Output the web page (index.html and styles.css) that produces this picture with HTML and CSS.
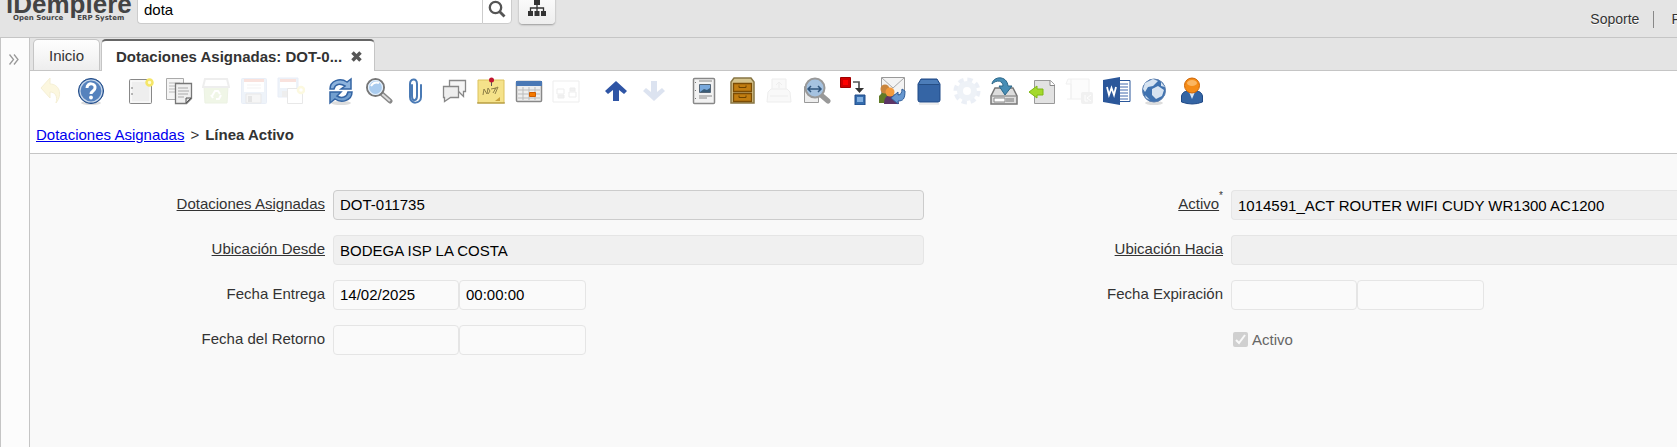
FILE: index.html
```html
<!DOCTYPE html>
<html lang="es">
<head>
<meta charset="utf-8">
<title>iDempiere - Dotaciones Asignadas</title>
<link rel="stylesheet" href="styles.css">
</head>
<body>
<header class="top-bar">
  <div class="logo">
    <div class="logo-name">iDempiere</div>
    <div class="logo-sub"><span>Open Source</span><span>ERP System</span></div>
  </div>
  <form class="global-search">
    <input type="text" aria-label="Buscar" value="dota">
    <button type="button" class="search-btn" aria-label="Buscar">
      <svg width="18" height="18" viewBox="0 0 18 18" fill="none" stroke="#555"><circle cx="7.500" cy="7.500" r="5.700" stroke-width="2.300"/><path d="M11.500 11.500l5 5" stroke-width="2.800"/></svg>
    </button>
  </form>
  <button type="button" class="menu-btn" aria-label="Menú">
    <svg width="18" height="16" viewBox="0 0 18 16" fill="#333"><path d="M6 0h6v5H6zM0 11h5v5H0zM6.500 11h5v5h-5zM13 11h5v5h-5z"/><path d="M9 4v7M2.500 11V8h13v3" fill="none" stroke="#333" stroke-width="1.300"/></svg>
  </button>
  <nav class="user-links">
    <a href="#">Soporte</a>
    <a href="#">Preferencia</a>
  </nav>
</header>

<div class="desktop">
  <aside class="side-bar">
    <button type="button" aria-label="Expandir">
      <svg width="10" height="11" viewBox="0 0 10 11" fill="none" stroke="#999" stroke-width="1.300"><path d="M.5.500l4 5-4 5M5 .5l4 5-4 5"/></svg>
    </button>
  </aside>
  <main class="window">
    <div class="tabs">
      <button type="button" class="tab">Inicio</button>
      <button type="button" class="tab selected">Dotaciones Asignadas: DOT-0...
        <svg width="11" height="11" viewBox="0 0 11 11"><path d="M1.500 1.500l8 8M9.500 1.500l-8 8" stroke="#555" stroke-width="3.500"/></svg>
      </button>
    </div>

    <div class="toolbar">
      <div class="group pair">
        <button type="button" disabled aria-label="Deshacer"><svg viewBox="0 0 28 28"><path d="M2 11L11 1v6c9 0 13 10 6 19 2-7-1-11-6-11v6z" fill="#edd440" stroke="#c4a000"/></svg></button>
        <button type="button" aria-label="Ayuda"><svg viewBox="0 0 28 28"><ellipse cx="14" cy="26" rx="10" ry="2" fill="#ddd"/><circle cx="14" cy="14" r="12.500" fill="#3465a4" stroke="#204a87"/><circle cx="14" cy="14" r="11" fill="#5582bd" stroke="#c9d8eb" stroke-width="1.200"/><path d="M10 11c0-6 9-5 8 0 0 3-4 3-4 6" fill="none" stroke="#fff" stroke-width="3"/><circle cx="14" cy="20.500" r="1.900" fill="#fff"/></svg></button>
      </div>
      <div class="group five">
        <button type="button" aria-label="Nuevo"><svg viewBox="0 0 28 28"><rect x="2.500" y="2.500" width="22" height="24" rx="1" fill="#eee" stroke="#888"/><path d="M4 4h19v21H4z" fill="none" stroke="#fff"/><path d="M4 11h2M4 17h2" stroke="#777"/><circle cx="22.500" cy="5.500" r="3" fill="#fffbd0" stroke="#f5e668" stroke-width="2.500"/></svg></button>
        <button type="button" aria-label="Copiar"><svg viewBox="0 0 28 28"><path d="M1.500 1.500h17v21h-17z" fill="#f5f5f5" stroke="#aaa"/><path d="M4 6h11M4 9h11M4 12h11M4 15h11" stroke="#bbb"/><path d="M10.500 6.500h16v15l-5 5h-11z" fill="#f0f0f0" stroke="#777" stroke-width="1.300"/><path d="M13 11h10M13 14h11M13 17h10M13 20h6" stroke="#aaa"/><path d="M26 21h-5v5z" fill="#ddd" stroke="#555"/></svg></button>
        <button type="button" disabled aria-label="Borrar"><svg viewBox="0 0 28 28"><path d="M2 9h24l-1 17H3z" fill="#a8cc70" stroke="#8cb058"/><path d="M3 2h22l2 8H1z" fill="#fff" stroke="#999" stroke-width="2"/><path d="M10 19l3-5h3l2 3M19 18l-2 4h-3M11 21l-2-3" fill="none" stroke="#fff" stroke-width="2"/></svg></button>
        <button type="button" disabled aria-label="Guardar"><svg viewBox="0 0 28 28"><rect x="1.500" y="1.500" width="25" height="25" rx="1" fill="#9bb7e0" stroke="#7a9cd0"/><path d="M4 2h20v13H4z" fill="#fff"/><path d="M4 2h20v3H4z" fill="#e05030"/><path d="M7 8h14M7 11h14" stroke="#bbb"/><path d="M6 17h15v9H6z" fill="#ccc" stroke="#777"/><path d="M8 19h4v6H8z" fill="#666"/></svg></button>
        <button type="button" disabled aria-label="Guardar y crear"><svg viewBox="0 0 28 28"><path d="M1 1h20v19H1z" fill="#9bb7e0" stroke="#7a9cd0"/><path d="M3 2h16v9H3z" fill="#fff"/><path d="M3 2h16v3H3z" fill="#e05030"/><path d="M5 14h7v6H5z" fill="#999"/><path d="M10.500 11.500h15v15h-15z" fill="#fff" stroke="#777"/><circle cx="24" cy="13" r="3" fill="#fff" stroke="#f2dd45" stroke-width="2.500"/></svg></button>
      </div>
      <div class="group seven">
        <button type="button" aria-label="Refrescar"><svg viewBox="0 0 28 28"><ellipse cx="14" cy="26" rx="10" ry="2" fill="#ddd"/><path d="M3 12C3 4 13 0 20 5l4-3v10H14l4-3C13 6 8 7 7 12z" fill="#8db3dd" stroke="#3465a4" stroke-width="1.500"/><path d="M25 15c0 8-10 12-17 7l-5 4V15h11l-4 4c5 3 10 1 11-4z" fill="#729fcf" stroke="#3465a4" stroke-width="1.500"/></svg></button>
        <button type="button" aria-label="Buscar registro"><svg viewBox="0 0 28 28"><path d="M16 16l9 8" stroke="#888" stroke-width="5" stroke-linecap="round"/><path d="M17 17l8 7" stroke="#ddd" stroke-width="2"/><circle cx="10.500" cy="10.500" r="8.500" fill="#aaccef" stroke="#777" stroke-width="2"/><circle cx="10.500" cy="10.500" r="7" fill="none" stroke="#e7f1fb" stroke-width="1.200"/><path d="M6 9q3-5 8-3" fill="none" stroke="#fff" stroke-width="2"/></svg></button>
        <button type="button" aria-label="Adjuntar"><svg viewBox="0 0 28 28"><path d="M10 8v11c0 6 5 5 5 0V7c0-7-7-5-7 0v13c0 8 11 7 11 0V8" fill="none" stroke="#4a7ab5" stroke-width="2" stroke-linecap="round"/></svg></button>
        <button type="button" aria-label="Chat"><svg viewBox="0 0 28 28"><path d="M9.500 3.500h16v11h-2v5l-5-5h-9z" fill="#f5f5f5" stroke="#888" stroke-width="1.300"/><path d="M3.500 9.500h15v11h-8l-6 4v-4h-1z" fill="#eee" stroke="#888" stroke-width="1.300"/></svg></button>
        <button type="button" aria-label="Nota"><svg viewBox="0 0 28 28"><path d="M1 3h26v23H1z" fill="#f5e28a" stroke="#dcc25c"/><path d="M0 26h28" stroke="#a58b35"/><path d="M6 18l1-6 3 5 1-6 2 3-2 3m3-5l5-1-3 5m1-4l4-2-3 7" fill="none" stroke="#8f8048"/><path d="M18 24l5-4v4z" fill="#c9a23c"/><path d="M14.500 4v5" stroke="#555"/><circle cx="14.500" cy="3" r="2.500" fill="#c01430"/></svg></button>
        <button type="button" aria-label="Calendario"><svg viewBox="0 0 28 28"><rect x="1.500" y="4.500" width="25" height="20" rx="1" fill="#eee" stroke="#888" stroke-width="1.500"/><path d="M1 4h26v5H1z" fill="#4a78b5"/><path d="M3 13h22M3 17h22M3 21h22M8 10v13M14 10v13M20 10v13" stroke="#bbb"/><path d="M14.500 15.500h6v4h-6z" fill="#f57900" stroke="#ce5c00"/></svg></button>
        <button type="button" disabled aria-label="Vista rápida"><svg viewBox="0 0 28 28" fill="none" stroke="#999"><path d="M1 4h26v21H1z"/><path d="M5 12h7v5H5zM17 15h7v5h-7z"/><path d="M6 18h6v3H6zM18 11h5v3h-5z" fill="#aaa"/></svg></button>
      </div>
      <div class="group pair">
        <button type="button" aria-label="Anterior"><svg viewBox="0 0 28 28"><path d="M14 4L3 14l3 3 5-4v11h6V13l5 4 3-3z" fill="#2f55a5"/></svg></button>
        <button type="button" disabled aria-label="Siguiente"><svg viewBox="0 0 28 28"><path d="M14 24L3 14l3-3 5 4V4h6v11l5-4 3 3z" fill="#2f55a5"/></svg></button>
      </div>
      <div class="group fourteen">
        <button type="button" aria-label="Informe"><svg viewBox="0 0 28 28"><rect x="3.500" y="1.500" width="21" height="25" rx="1" fill="#f2f2f2" stroke="#888" stroke-width="1.500"/><path d="M9 4h13M9 19h13M9 21h8" stroke="#888"/><path d="M5.500 5v1m0 7v1m0 7v1" stroke="#777"/><path d="M9.500 7.500h11v8h-11z" fill="#78a8dc" stroke="#567"/><path d="M10 15l4-3 3 1 3-2v4z" fill="#395c78"/></svg></button>
        <button type="button" aria-label="Archivo"><svg viewBox="0 0 28 28"><path d="M3 26V5l3-4h17l3 4v21z" fill="#d6c58e" stroke="#887644" stroke-width="1.500"/><path d="M5.500 6.500h18v8h-18zM5.500 16.500h18v8h-18z" fill="#c17d11" stroke="#7b4c04" stroke-width="1.300"/><path d="M11 8.500v2h7v-2m-7 10v2h7v-2" fill="none" stroke="#704500"/></svg></button>
        <button type="button" disabled aria-label="Imprimir"><svg viewBox="0 0 28 28" fill="#ddd" stroke="#999"><path d="M7 14V2h14v12"/><path d="M3 15l3-3h16l3 3 1 10H2z"/><path d="M5 19h18M14 11V5m-3 3l3-3 3 3" fill="none"/></svg></button>
        <button type="button" aria-label="Zoom"><svg viewBox="0 0 28 28"><path d="M1.500 9.500h14v16h-14z" fill="#eee" stroke="#999"/><path d="M18 18l7 6" stroke="#999" stroke-width="5" stroke-linecap="round"/><circle cx="12" cy="11" r="9.500" fill="#a5c2e0" stroke="#999" stroke-width="2"/><path d="M5 12h13M8 9l-3 3 3 3M15 9l3 3-3 3" fill="none" stroke="#31577f" stroke-width="1.500"/></svg></button>
        <button type="button" aria-label="Flujos activos"><svg viewBox="0 0 28 28"><path d="M.5.500h10v10H.5z" fill="#d00000" stroke="#a00000"/><path d="M3 3h5v5H3z" fill="#f00"/><path d="M13 5h6v8" fill="none" stroke="#555" stroke-width="1.700"/><path d="M15 11h9l-4.500 5z" fill="#333"/><path d="M15 18h10v10H15z" fill="#346cae" stroke="#204a87"/><path d="M17 20h6v5h-6z" fill="#82afe0"/></svg></button>
        <button type="button" aria-label="Solicitudes"><svg viewBox="0 0 28 28"><path d="M3.500.500h23v17h-23z" fill="#f3f3f3" stroke="#999"/><path d="M4 1l11 10L26 1" fill="none" stroke="#aaa"/><path d="M1 26v-7l4-4h6l3 4v7z" fill="#607b27"/><circle cx="7" cy="12" r="4.500" fill="#c9853d"/><path d="M6 27c0-8 4-9 8-9s6 3 7 9z" fill="#5c3566"/><circle cx="12" cy="15" r="4.500" fill="#f39a3c"/><path d="M13 21l7-6v3q4 0 4-6l3 2c0 8-2 10-7 10v3z" fill="#6797cf" stroke="#315f9b"/></svg></button>
        <button type="button" aria-label="Producto"><svg viewBox="0 0 28 28"><path d="M6 2h16l3 5v16q0 2-2 2H5q-2 0-2-2V7z" fill="#3565a5" stroke="#204a87"/><path d="M6 3h16l2 4H4z" fill="#4c7db9"/><path d="M4 7.500h20" stroke="#254e84"/><path d="M4 27h20" stroke="#ddd"/></svg></button>
        <button type="button" disabled aria-label="Proceso"><svg viewBox="0 0 28 28"><circle cx="14" cy="14" r="11" fill="none" stroke="#88a3c9" stroke-width="5" stroke-dasharray="5 3.640"/><circle cx="14" cy="14" r="7" fill="none" stroke="#99b2d4" stroke-width="6"/></svg></button>
        <button type="button" aria-label="Exportar"><svg viewBox="0 0 28 28"><path d="M5 11h18l4 8v8H1v-8z" fill="#ddd" stroke="#777" stroke-width="1.500"/><path d="M2 19h24" stroke="#777"/><path d="M4 21h11v4H4z" fill="#fff" stroke="#888"/><path d="M17 21v4m2-4v4m2-4v4m2-4v4" stroke="#777"/><path d="M2 7C3-1 17-2 18 9h4l-7 9-6-9h4c0-5-6-7-11-2z" fill="#478db5" stroke="#2d6788"/></svg></button>
        <button type="button" aria-label="Importar archivo"><svg viewBox="0 0 28 28"><path d="M6.500 3.500h16l4 4v19h-20z" fill="#e2e2e2" stroke="#999"/><path d="M22 3.500v5h5" fill="#fff" stroke="#888"/><path d="M1 15l8-6v3h6v6H9v3z" fill="#a4d92c" stroke="#7fb814"/></svg></button>
        <button type="button" disabled aria-label="Importar CSV"><svg viewBox="0 0 28 28"><path d="M3 2h21v20H6V7H1z" fill="#eee" stroke="#aaa"/><path d="M6 2v20H2" fill="none" stroke="#aaa"/><rect x="16" y="15" width="12" height="12" rx="2" fill="#aaa"/><path d="M20 18v6h3m3-6l-4 3 4 3" fill="none" stroke="#fff"/></svg></button>
        <button type="button" aria-label="Word"><svg viewBox="0 0 28 28"><path d="M15 3.500h12v21H15z" fill="#fff" stroke="#2b579a"/><path d="M17 7h8M17 10h8M17 13h8M17 16h8M17 19h8M17 22h8" stroke="#4169ad"/><path d="M0 3l17-3v28L0 25z" fill="#2b579a"/><path d="M4 10l2 8 2.500-7 2.500 7 2-8" fill="none" stroke="#fff" stroke-width="1.800"/></svg></button>
        <button type="button" aria-label="Web"><svg viewBox="0 0 28 28"><ellipse cx="14" cy="26" rx="9" ry="2" fill="#ddd"/><circle cx="14" cy="13.500" r="11.500" fill="#3f72b0" stroke="#5d7fae"/><path d="M5 6l8-4 5 2-5 5-5 1-3 5-2-3zM12 12l6-3 6 4-2 6-6 3-4-4zM21 5l4 5-4-1zM5 18l5 5-4-2z" fill="#d6e3f1"/></svg></button>
        <button type="button" aria-label="Usuario"><svg viewBox="0 0 28 28"><path d="M3.500 25v-6q1-5 7-5h7q6 0 7 5v6q-10 4-21 0z" fill="#3465a4" stroke="#204a87"/><path d="M11 15h6l-3 7z" fill="#d6e5f5"/><circle cx="14" cy="8.500" r="7.500" fill="#f58b16" stroke="#ce6504"/><ellipse cx="14" cy="6" rx="5" ry="3" fill="#fbb662"/></svg></button>
      </div>
    </div>

    <nav class="breadcrumb"><a href="#">Dotaciones Asignadas</a><span>&gt;</span><strong>Línea Activo</strong></nav>

    <form class="record">
      <label class="zoomable" for="dotacion"><span>Dotaciones Asignadas</span></label>
      <input class="editor parent" type="text" id="dotacion" value="DOT-011735" readonly>
      <label class="zoomable" for="activo"><span>Activo</span><sup>*</sup></label>
      <input class="editor readonly" type="text" id="activo" value="1014591_ACT ROUTER WIFI CUDY WR1300 AC1200" readonly>

      <label class="zoomable" for="desde"><span>Ubicación Desde</span></label>
      <input class="editor readonly" type="text" id="desde" value="BODEGA ISP LA COSTA" readonly>
      <label class="zoomable" for="hacia"><span>Ubicación Hacia</span></label>
      <input class="editor readonly" type="text" id="hacia" readonly>

      <label for="entrega">Fecha Entrega</label>
      <div class="datetime">
        <input class="editor" type="text" id="entrega" value="14/02/2025" readonly>
        <input class="editor" type="text" aria-label="Hora Entrega" value="00:00:00" readonly>
      </div>
      <label for="expiracion">Fecha Expiración</label>
      <div class="datetime">
        <input class="editor" type="text" id="expiracion" readonly>
        <input class="editor" type="text" aria-label="Hora Expiración" readonly>
      </div>

      <label for="retorno">Fecha del Retorno</label>
      <div class="datetime">
        <input class="editor" type="text" id="retorno" readonly>
        <input class="editor" type="text" aria-label="Hora del Retorno" readonly>
      </div>
      <div class="check">
        <input type="checkbox" id="isactive" checked disabled>
        <label for="isactive">Activo</label>
      </div>
    </form>
  </main>
</div>
</body>
</html>
```

FILE: styles.css
```css
* {
  box-sizing: border-box;
}
body {
  margin: 0;
  min-height: 100vh;
  display: flex;
  flex-direction: column;
  font-family: "Liberation Sans", Arial, sans-serif;
  font-size: 15px;
  color: #333;
  background-color: #f9f9f9;
  overflow: hidden;
}
button, input {
  font: inherit;
  margin: 0;
}
svg {
  display: block;
}

/* header */
.top-bar {
  display: flex;
  align-items: flex-end;
  height: 38px;
  padding: 0 0 13px 6px;
  overflow: hidden;
  background-color: #e4e4e4;
  border-bottom: 1px solid #c5c5c5;
}
.logo {
  width: 131px;
  padding-bottom: 2px;
  color: #444;
  font-weight: bold;
}
.logo-name {
  font-size: 26px;
  line-height: 20px;
}
.logo-sub {
  display: flex;
  gap: 14px;
  padding-left: 7px;
  font-size: 7px;
  line-height: 8px;
  font-family: "DejaVu Sans", sans-serif;
  white-space: nowrap;
}
.global-search {
  display: flex;
}
.global-search input {
  width: 345px;
  height: 28px;
  padding: 0 6px 2px;
  border: 1px solid #ccc;
  border-right: 0;
  border-radius: 4px 0 0 4px;
  color: #000;
  background-color: #fff;
}
.search-btn {
  width: 30px;
  height: 28px;
  padding: 0 0 3px 5px;
  border: 1px solid #ccc;
  border-radius: 0 4px 4px 0;
  background-color: #fff;
}
.menu-btn {
  width: 36px;
  height: 32px;
  margin-left: 7px;
  padding: 0 9px;
  border: 0;
  border-radius: 4px;
  background: linear-gradient(#fefefe, #eee);
  box-shadow: 0 1px 2px #999;
}
.user-links {
  display: flex;
  margin-left: auto;
  margin-right: -66px;
  margin-bottom: -4px;
  font-size: 14px;
  line-height: 17px;
  white-space: nowrap;
}
.user-links a {
  color: #333;
  text-decoration: none;
  text-shadow: 0 1px 0 #fff;
}
.user-links a + a {
  margin-left: 14px;
  padding-left: 17px;
  border-left: 1px solid #888;
}

.desktop {
  display: flex;
  flex: 1;
}
.side-bar {
  width: 30px;
  padding-top: 13px;
  border: 1px solid #c5c5c5;
  border-width: 0 1px;
  background-color: #fcfcfc;
}
.side-bar button {
  padding: 0 8px;
  border: 0;
  background: none;
}
.window {
  flex: 1;
  min-width: 0;
}

/* tabs */
.tabs {
  display: flex;
  align-items: flex-end;
  gap: 1px;
  height: 33px;
  padding-left: 3px;
  background-color: #e4e4e4;
  border-bottom: 1px solid #c5c5c5;
}
.tab {
  height: 31px;
  padding: 0 15px;
  color: #333;
  border: 1px solid #c5c5c5;
  border-bottom: 0;
  border-radius: 5px 5px 0 0;
  background: linear-gradient(#fefefe, #eee);
  white-space: nowrap;
}
.tab.selected {
  display: flex;
  align-items: center;
  gap: 9px;
  height: 32px;
  margin-bottom: -1px;
  padding: 0 12px 0 14px;
  font-weight: bold;
  border-top: 2px solid #666;
  background: #fff;
}

/* toolbar */
.toolbar {
  display: flex;
  gap: 22px;
  padding: 6px 9px 8px;
  background-color: #fff;
}
.group {
  display: flex;
  justify-content: space-between;
  flex-shrink: 0;
}
.pair {
  width: 66px;
}
.five {
  width: 178px;
}
.seven {
  width: 253px;
}
.fourteen {
  width: 516px;
}
.toolbar button {
  width: 28px;
  height: 28px;
  padding: 0;
  border: 0;
  background: none;
}
.toolbar button:disabled {
  opacity: 0.16;
}

.breadcrumb {
  display: flex;
  gap: 6px;
  padding: 14px 6px 10px;
  line-height: 16px;
  background-color: #fff;
  border-bottom: 1px solid #c5c5c5;
}
.breadcrumb a {
  color: #0000ee;
}

/* record form */
.record {
  display: grid;
  grid-template-columns: 295fr 591fr 291fr 446fr;
  gap: 15px 8px;
  padding-top: 36px;
}
.record > label {
  padding-top: 5px;
  line-height: 18px;
  text-align: right;
  white-space: nowrap;
}
.zoomable span {
  text-decoration: underline;
}
.zoomable sup {
  font-size: 10px;
  line-height: 0;
  vertical-align: 10px;
}
.editor {
  width: 100%;
  min-width: 0;
  height: 30px;
  padding: 0 6px 2px;
  color: #000;
  border: 1px solid #e5e5e5;
  border-radius: 4px;
  background-color: #fafafa;
}
.editor.readonly {
  padding-bottom: 0;
  background-color: #f0f0f0;
}
.editor.parent {
  border-color: #ccc;
  background-color: #f0f0f0;
}
#activo, #hacia {
  border-right: 0;
  border-radius: 4px 0 0 4px;
}
.datetime {
  display: flex;
}
.datetime .editor {
  width: 126px;
}
.datetime .editor + .editor {
  width: 127px;
}
.check {
  grid-column: 4;
  display: flex;
  align-items: center;
  gap: 4px;
  height: 28px;
  padding-left: 2px;
  color: #666;
}
.check input {
  appearance: none;
  width: 15px;
  height: 15px;
  border-radius: 2px;
  background: #d0d0d0 url("data:image/svg+xml,%3Csvg xmlns='http://www.w3.org/2000/svg' viewBox='0 0 15 15'%3E%3Cpath d='M3 8l3 3 6-8' fill='none' stroke='%23f9f9f9' stroke-width='2'/%3E%3C/svg%3E");
}
```
